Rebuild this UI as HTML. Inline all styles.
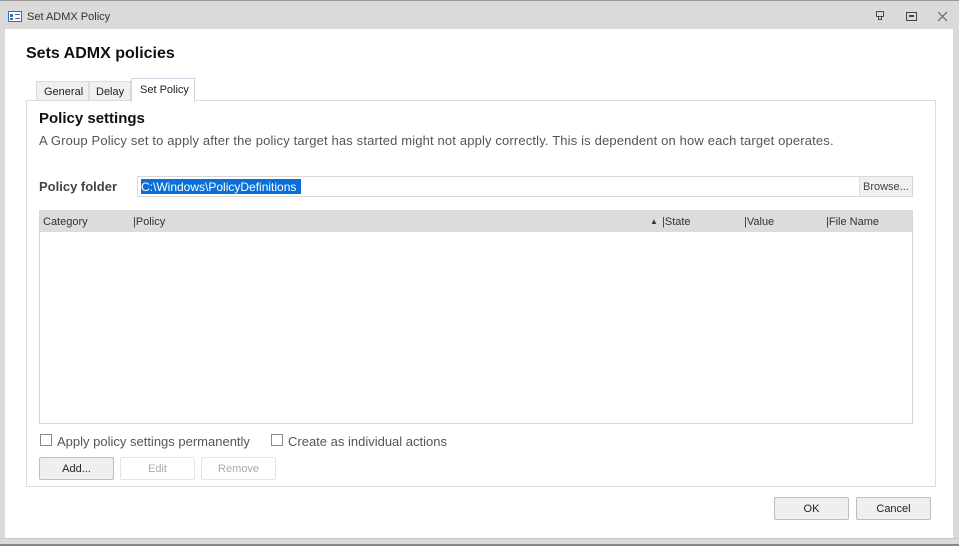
<!DOCTYPE html>
<html><head><meta charset="utf-8"><style>
*{box-sizing:border-box;margin:0;padding:0}
body{width:959px;height:546px;background:#dadada;font-family:"Liberation Sans",sans-serif;position:relative;overflow:hidden;font-size:12px;color:#222}
.a{position:absolute}
.btn{position:absolute;border:1px solid #bdbdbd;border-radius:2px;background:#efefef;text-align:center;font-size:11px;line-height:22px;color:#222}
.dis{background:#fff;border-color:#e4e4e4;color:#aaa}
.cb{position:absolute;width:12px;height:12px;border:1px solid #888;background:#fff}
</style></head><body>
<div class="a" style="left:0;top:0;width:959px;height:1px;background:#999"></div>
<div class="a" style="left:8px;top:11px;width:14px;height:11px;border:1px solid #3a6ea5;background:#fff"></div>
<div class="a" style="left:10px;top:14px;width:3px;height:3px;background:#3a6ea5"></div>
<div class="a" style="left:10px;top:18px;width:3px;height:2px;background:#3a6ea5"></div>
<div class="a" style="left:15px;top:14px;width:5px;height:1px;background:#3a6ea5"></div>
<div class="a" style="left:15px;top:18px;width:5px;height:1px;background:#3a6ea5"></div>
<div class="a" style="left:27px;top:11px;font-size:11px;color:#333">Set ADMX Policy</div>
<div class="a" style="left:876px;top:11px;width:8px;height:6px;border:1px solid #444;border-radius:1px"></div>
<div class="a" style="left:878px;top:17px;width:4px;height:3px;border:1px solid #444;border-top:none"></div>
<div class="a" style="left:906px;top:12px;width:11px;height:9px;border:1px solid #444"></div>
<div class="a" style="left:909px;top:15px;width:5px;height:2px;background:#444"></div>
<svg class="a" style="left:937px;top:11px" width="11" height="11"><path d="M1 1L10 10M10 1L1 10" stroke="#666" stroke-width="1.2"/></svg>
<div class="a" style="left:5px;top:29px;width:948px;height:509px;background:#fff"></div>
<div class="a" style="left:0;top:538px;width:959px;height:1px;background:#c8c8c8"></div>
<div class="a" style="left:0;top:544px;width:959px;height:2px;background:#888"></div>
<div class="a" style="left:26px;top:45px;font-size:16px;font-weight:bold;color:#111">Sets ADMX policies</div>
<div class="a" style="left:36px;top:81px;width:53px;height:20px;background:#f0f0f0;border:1px solid #d5dde5;border-bottom:none;font-size:11px;line-height:21px;padding-left:7px">General</div>
<div class="a" style="left:89px;top:81px;width:42px;height:20px;background:#f0f0f0;border:1px solid #d5dde5;border-bottom:none;font-size:11px;line-height:21px;padding-left:6px">Delay</div>
<div class="a" style="left:131px;top:78px;width:64px;height:24px;background:#fff;border:1px solid #c9d5e0;border-bottom:none;font-size:11px;line-height:23px;padding-left:8px;z-index:2">Set Policy</div>
<div class="a" style="left:26px;top:100px;width:910px;height:387px;border:1px solid #d5dde5"></div>
<div class="a" style="left:39px;top:110px;font-size:15px;font-weight:bold;color:#111">Policy settings</div>
<div class="a" style="left:39px;top:133px;font-size:13px;letter-spacing:0.15px;color:#555;white-space:nowrap">A Group Policy set to apply after the policy target has started might not apply correctly. This is dependent on how each target operates.</div>
<div class="a" style="left:39px;top:179px;font-size:13px;font-weight:bold;color:#444">Policy folder</div>
<div class="a" style="left:137px;top:176px;width:776px;height:21px;border:1px solid #d8d8d8"></div>
<div class="a" style="left:141px;top:179px;height:15px;width:160px;background:#0a6fd8;color:#fff;font-size:12px;line-height:16px;white-space:nowrap;overflow:hidden">C:\Windows\PolicyDefinitions</div>
<div class="a" style="left:859px;top:177px;width:53px;height:19px;background:#f0f0f0;border-left:1px solid #ddd;font-size:11px;line-height:20px;padding-left:3px;color:#444">Browse...</div>
<div class="a" style="left:39px;top:210px;width:874px;height:214px;border:1px solid #d8d8d8"></div>
<div class="a" style="left:40px;top:211px;width:872px;height:21px;background:#dcdcdc;font-size:11px;line-height:21px;color:#333">
<span class="a" style="left:3px;top:1px">Category</span><span class="a" style="left:93px;top:1px">|Policy</span><span class="a" style="left:610px;font-size:8px">▲</span><span class="a" style="left:622px;top:1px">|State</span><span class="a" style="left:704px;top:1px">|Value</span><span class="a" style="left:786px;top:1px">|File Name</span></div>
<div class="cb" style="left:40px;top:434px"></div>
<div class="a" style="left:57px;top:434px;font-size:13px;color:#555">Apply policy settings permanently</div>
<div class="cb" style="left:271px;top:434px"></div>
<div class="a" style="left:288px;top:434px;font-size:13px;color:#555">Create as individual actions</div>
<div class="btn" style="left:39px;top:457px;width:75px;height:23px">Add...</div>
<div class="btn dis" style="left:120px;top:457px;width:75px;height:23px">Edit</div>
<div class="btn dis" style="left:201px;top:457px;width:75px;height:23px">Remove</div>
<div class="btn" style="left:774px;top:497px;width:75px;height:23px">OK</div>
<div class="btn" style="left:856px;top:497px;width:75px;height:23px">Cancel</div>
</body></html>
